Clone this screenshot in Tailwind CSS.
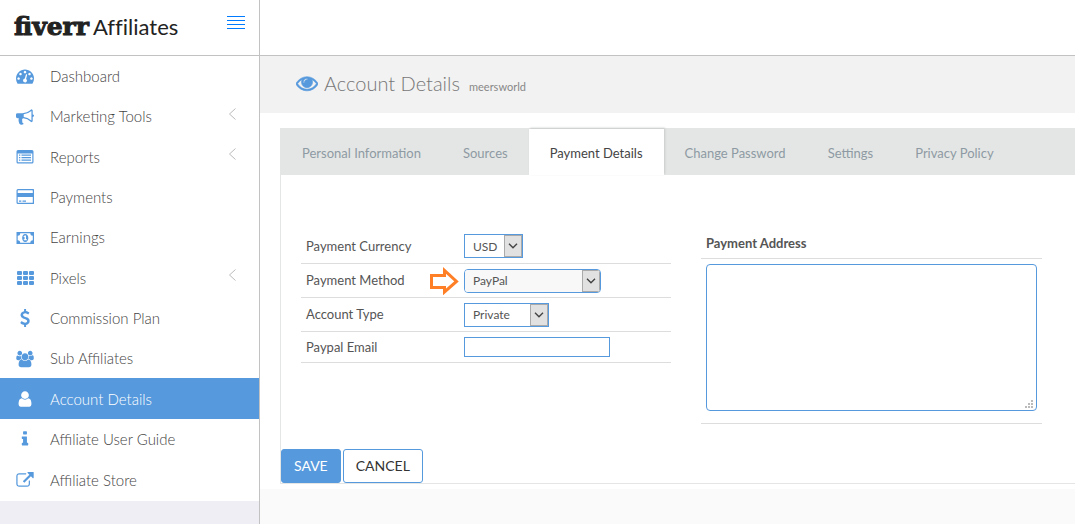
<!DOCTYPE html>
<html lang="en">
<head>
  <meta charset="UTF-8" />
  <meta name="viewport" content="width=device-width, initial-scale=1.0"/>
  <title>Fiverr Affiliates - Account Details</title>
  <script src="https://cdn.jsdelivr.net/npm/@tailwindcss/browser@4"></script>
</head>
<body class="bg-[#fafafa] font-['Lato','Open_Sans',sans-serif] text-[#555]">
  <div class="flex min-h-screen">

    <!-- Sidebar -->
    <aside class="w-[260px] shrink-0 border-r border-[#c2c2c2] bg-[#efeef4]">
      <div class="flex h-14 items-start justify-between border-b border-[#c2c2c2] bg-white pt-3 pr-[14px] pl-[14px]">
        <a href="#" class="flex items-baseline gap-1 pt-px leading-7 text-[#222]">
          <span class="font-['DejaVu_Serif',serif] text-[25px] leading-7 font-bold [-webkit-text-stroke:1px_#222]">fiverr</span>
          <span class="text-[22px] leading-7 [font-variant-ligatures:none]">Affiliates</span>
        </a>
        <button type="button" aria-label="Toggle menu" class="mt-1">
          <svg class="h-[14px] w-[18px]" viewBox="0 0 18 14" fill="#007bff"><path d="M0 0h18v1H0zM0 4h18v1H0zM0 8h18v1H0zM0 12h18v1H0z"/></svg>
        </button>
      </div>

      <nav class="bg-white">
        <ul class="grid min-h-[445px] auto-rows-fr pb-px text-[15px] font-light text-[#444]">
          <li>
            <a href="#" class="flex h-full items-center gap-4 pr-[23px] pl-4">
              <svg class="h-[18px] w-[18px] fill-[#5699dd]" viewBox="0 0 1792 1792"><path d="M384 1152q0-53-37.500-90.500t-90.500-37.500-90.500 37.500-37.500 90.500 37.500 90.500 90.500 37.500 90.500-37.500 37.500-90.500zm192-448q0-53-37.500-90.500t-90.500-37.500-90.500 37.500-37.500 90.500 37.500 90.500 90.500 37.500 90.500-37.500 37.500-90.500zm428 481l101-382q6-26-7.500-48.500t-38.500-29.500-48 6.500-30 39.500l-101 382q-60 5-107 43.500t-63 98.500q-20 77 20 146t117 89 146-20 89-117q16-60-6-117t-72-91zm660-33q0-53-37.500-90.500t-90.500-37.500-90.500 37.500-37.500 90.500 37.500 90.500 90.500 37.500 90.500-37.500 37.500-90.500zm-640-640q0-53-37.500-90.500t-90.500-37.500-90.500 37.500-37.500 90.500 37.500 90.500 90.500 37.500 90.500-37.500 37.500-90.500zm448 192q0-53-37.500-90.500t-90.500-37.500-90.500 37.500-37.500 90.500 37.500 90.500 90.500 37.500 90.500-37.500 37.500-90.500zm320 448q0 261-141 483-19 29-54 29h-1402q-35 0-54-29-141-221-141-483 0-182 71-348t191-286 286-191 348-71 348 71 286 191 191 286 71 348z"/></svg>
              <span>Dashboard</span>
            </a>
          </li>
          <li>
            <a href="#" class="flex h-full items-center gap-4 pr-[23px] pl-4">
              <svg class="h-[18px] w-[18px] fill-[#5699dd]" viewBox="0 0 1792 1792"><path d="M1664 640q53 0 90.500 37.500t37.500 90.500-37.500 90.500-90.500 37.500v384q0 52-38 90t-90 38q-417-347-812-380-58 19-91 66t-31 100.500 40 92.500q-20 33-23 65.500t6 58 33.500 55 48 50 61.500 50.500q-29 58-111.500 83t-168.500 11.500-132-55.500q-7-23-29.500-87.500t-32-94.500-23-89-15-101 3.500-98.500 22-110.500h-122q-66 0-113-47t-47-113v-192q0-66 47-113t113-47h480q435 0 896-384 52 0 90 38t38 90v384zm-128 604v-954q-394 302-768 343v270q377 42 768 341z"/></svg>
              <span>Marketing Tools</span>
              <svg class="mb-[6px] ml-auto h-3 w-2" viewBox="0 0 8 12" fill="none" stroke="#bbb"><path d="M7.500.5L1.500 6l6 5.500"/></svg>
            </a>
          </li>
          <li>
            <a href="#" class="flex h-full items-center gap-4 pr-[23px] pl-4">
              <svg class="h-[18px] w-[18px] fill-[#5699dd]" viewBox="0 0 18 18"><path fill-rule="evenodd" d="M2 2h14a1.500 1.500 0 0 1 1.500 1.500v10.500a1.500 1.500 0 0 1-1.500 1.500H2a1.500 1.500 0 0 1-1.500-1.500V3.500A1.500 1.500 0 0 1 2 2zM1.700 5.500v8.300q0 .5.500.5h13.600q.5 0 .5-.5V5.500z"/><path d="M3 6.500h1.300v1.300H3zM5.500 6.500H15v1.300H5.500zM3 9h1.300v1.300H3zM5.500 9H15v1.300H5.500zM3 11.500h1.300v1.300H3zM5.500 11.500H15v1.300H5.500z"/></svg>
              <span>Reports</span>
              <svg class="mb-[6px] ml-auto h-3 w-2" viewBox="0 0 8 12" fill="none" stroke="#bbb"><path d="M7.500.5L1.500 6l6 5.500"/></svg>
            </a>
          </li>
          <li>
            <a href="#" class="flex h-full items-center gap-4 pr-[23px] pl-4">
              <svg class="h-[18px] w-[18px] fill-[#5699dd]" viewBox="0 0 18 18"><path fill-rule="evenodd" d="M2 1h15a1.500 1.500 0 0 1 1.500 1.500v12a1.500 1.500 0 0 1-1.500 1.500H2a1.500 1.500 0 0 1-1.500-1.500v-12A1.500 1.500 0 0 1 2 1zM1.700 2.700V5h15.100V2.700q0-.5-.5-.5H2.200q-.5 0-.5.5zM1.700 9v5.300q0 .5.500.5h14.100q.5 0 .5-.5V9z"/><path d="M3 12.500h2.300v1.200H3zM6.500 12.500H10v1.200H6.500z"/></svg>
              <span>Payments</span>
            </a>
          </li>
          <li>
            <a href="#" class="flex h-full items-center gap-4 pr-[23px] pl-4">
              <svg class="h-[18px] w-[18px] fill-[#5699dd]" viewBox="0 0 18 18"><path fill-rule="evenodd" d="M.5 3H18v12H.5zM4.200 4.200A2.500 2.500 0 0 1 1.700 6.700v4.600a2.500 2.500 0 0 1 2.500 2.500h10.100a2.500 2.500 0 0 1 2.500-2.500V6.700a2.500 2.500 0 0 1-2.500-2.500z"/><path fill-rule="evenodd" d="M9.250 5c2 0 3.100 1.900 3.100 4s-1.100 4-3.100 4-3.100-1.900-3.100-4 1.100-4 3.100-4zM8.700 6.500l-1.300 1.100.6.700.6-.5v2.500h-.9v1h3.200v-1h-.9V6.500z"/></svg>
              <span>Earnings</span>
            </a>
          </li>
          <li>
            <a href="#" class="flex h-full items-center gap-4 pr-[23px] pl-4">
              <svg class="h-[18px] w-[18px] fill-[#5699dd]" viewBox="0 0 18 18"><g><rect x="1" y="2" width="5" height="4" rx="1"/><rect x="7" y="2" width="5" height="4" rx="1"/><rect x="13" y="2" width="5" height="4" rx="1"/><rect x="1" y="7" width="5" height="4" rx="1"/><rect x="7" y="7" width="5" height="4" rx="1"/><rect x="13" y="7" width="5" height="4" rx="1"/><rect x="1" y="12" width="5" height="4" rx="1"/><rect x="7" y="12" width="5" height="4" rx="1"/><rect x="13" y="12" width="5" height="4" rx="1"/></g></svg>
              <span>Pixels</span>
              <svg class="mb-[6px] ml-auto h-3 w-2" viewBox="0 0 8 12" fill="none" stroke="#bbb"><path d="M7.500.5L1.500 6l6 5.500"/></svg>
            </a>
          </li>
          <li>
            <a href="#" class="flex h-full items-center gap-4 pr-[23px] pl-4">
              <svg class="h-[18px] w-[18px] fill-[#5699dd]" viewBox="0 0 1792 1792"><path d="M1362 1185q0 153-99.500 263.500t-258.500 136.500v175q0 14-9 23t-23 9h-135q-13 0-22.500-9.500t-9.500-22.500v-175q-66-9-127.500-31t-101.500-44.500-74-48-46.500-37.500-17.500-18q-17-21-2-41l103-135q7-10 23-12 15-2 24 9l2 2q113 99 243 125 37 8 74 8 81 0 142.500-43t61.500-122q0-28-15-53t-33.500-42-58.500-37.500-66-32-80-32.500q-39-16-61.500-25t-61.500-26.500-62.500-31-56.500-35.500-53.500-42.500-43.500-49-35.500-58-21-66.500-8.500-78q0-138 98-242t255-134v-180q0-13 9.500-22.500t22.500-9.500h135q14 0 23 9t9 23v176q57 6 110.500 23t87 33.500 63.500 37.500 39 29 15 14q17 18 5 38l-81 146q-8 15-23 16-14 3-27-7-3-3-14.500-12t-39-26.500-58.500-32-74.500-26-85.500-11.500q-95 0-155 43t-60 111q0 26 8.500 48t29.500 41.500 39.500 33 56 31 60.500 27 70 27.500q53 20 81 31.500t76 35 75.500 42.500 62 50 53 63.500 31.500 76.500 13 94z"/></svg>
              <span>Commission Plan</span>
            </a>
          </li>
          <li>
            <a href="#" class="flex h-full items-center gap-4 pr-[23px] pl-4">
              <svg class="h-[18px] w-[18px] fill-[#5699dd]" viewBox="32 0 1984 1792"><path d="M657 896q-162 5-265 128h-134q-82 0-138-40.500t-56-118.500q0-353 124-353 6 0 43.500 21t97.500 42.500 119 21.500q67 0 133-23-5 37-5 66 0 159 90 293zm1071 637q0 120-73 189.500t-194 69.500h-874q-121 0-194-69.500t-73-189.500q0-53 3.500-103.500t14-109 26.500-108.500 43-97.500 62-81 85.500-53.500 111.500-20q10 0 43 21.500t73 48 107 48 135 21.500 135-21.500 107-48 73-48 43-21.500q61 0 111.500 20t85.500 53.500 62 81 43 97.500 26.500 108.500 14 109 3.500 103.500zm-1024-1277q0 106-75 181t-181 75-181-75-75-181 75-181 181-75 181 75 75 181zm704 384q0 159-112.500 271.500t-271.500 112.500-271.500-112.500-112.500-271.500 112.500-271.500 271.500-112.500 271.500 112.500 112.500 271.500zm576 225q0 78-56 118.500t-138 40.500h-134q-103-123-265-128 90-134 90-293 0-29-5-66 66 23 133 23 59 0 119-21.500t97.500-42.500 43.500-21q124 0 124 353zm-128-609q0 106-75 181t-181 75-181-75-75-181 75-181 181-75 181 75 75 181z"/></svg>
              <span>Sub Affiliates</span>
            </a>
          </li>
          <li>
            <a href="#" class="flex h-full items-center gap-4 bg-[#5699dd] pr-[23px] pl-4 text-white shadow-[0_-1px_0_#5699dd]">
              <svg class="h-[18px] w-[18px] fill-white" viewBox="0 0 1792 1792"><path d="M1536 1399q0 109-62.500 187t-150.500 78h-854q-88 0-150.500-78t-62.500-187q0-85 8.500-160.500t31.500-152 58.500-131 94-89 134.500-34.500q131 128 313 128t313-128q76 0 134.500 34.500t94 89 58.500 131 31.500 152 8.500 160.500zm-256-887q0 159-112.500 271.500t-271.500 112.500-271.500-112.500-112.500-271.500 112.500-271.500 271.500-112.500 271.500 112.500 112.500 271.500z"/></svg>
              <span>Account Details</span>
            </a>
          </li>
          <li>
            <a href="#" class="flex h-full items-center gap-4 pr-[23px] pl-4">
              <svg class="h-[18px] w-[18px] fill-[#5699dd]" viewBox="0 0 1792 1792"><path d="M1216 1344v128q0 26-19 45t-45 19h-512q-26 0-45-19t-19-45v-128q0-26 19-45t45-19h64v-384h-64q-26 0-45-19t-19-45v-128q0-26 19-45t45-19h384q26 0 45 19t19 45v576h64q26 0 45 19t19 45zm-128-1152v192q0 26-19 45t-45 19h-256q-26 0-45-19t-19-45v-192q0-26 19-45t45-19h256q26 0 45 19t19 45z"/></svg>
              <span>Affiliate User Guide</span>
            </a>
          </li>
          <li>
            <a href="#" class="flex h-full items-center gap-4 pr-[23px] pl-4">
              <svg class="h-[18px] w-[18px] fill-[#5699dd]" viewBox="32 0 1856 1792"><path d="M1472 992v320q0 119-84.500 203.500t-203.500 84.500h-832q-119 0-203.500-84.500t-84.500-203.500v-832q0-119 84.500-203.500t203.500-84.500h704q14 0 23 9t9 23v64q0 14-9 23t-23 9h-704q-66 0-113 47t-47 113v832q0 66 47 113t113 47h832q66 0 113-47t47-113v-320q0-14 9-23t23-9h64q14 0 23 9t9 23zm384-864v512q0 26-19 45t-45 19-45-19l-176-176-652 652q-10 10-23 10t-23-10l-114-114q-10-10-10-23t10-23l652-652-176-176q-19-19-19-45t19-45 45-19h512q26 0 45 19t19 45z"/></svg>
              <span>Affiliate Store</span>
            </a>
          </li>
        </ul>
      </nav>
    </aside>

    <!-- Main column -->
    <div class="min-w-0 flex-1">
      <div class="h-14 border-b border-[#c2c2c2] bg-white"></div>

      <!-- Page title -->
      <header class="flex h-[57px] items-center bg-[#f2f2f2] pb-1 pl-9">
        <svg class="mr-[6px] h-[22px] w-[22px] fill-[#5699dd] stroke-[#5699dd] stroke-[50]" viewBox="0 0 1792 1792"><path d="M1664 960q-152-236-381-353 61 104 61 225 0 185-131.500 316.500t-316.500 131.500-316.500-131.500-131.500-316.500q0-121 61-225-229 117-381 353 133 205 333.500 326.500t434.500 121.500 434.500-121.500 333.500-326.500zm-720-384q0-20-14-34t-34-14q-125 0-214.500 89.500t-89.500 214.500q0 20 14 34t34 14 34-14 14-34q0-86 61-147t147-61q20 0 34-14t14-34zm848 384q0 34-20 69-140 230-376.500 368.500t-499.500 138.500-499.500-139-376.500-368q-20-35-20-69t20-69q140-229 376.500-368t499.500-139 499.500 139 376.500 368q20 35 20 69z"/></svg>
        <div class="flex items-baseline gap-[9px]">
          <h1 class="text-xl font-light text-[#777]">Account Details</h1>
          <small class="text-[11px] text-[#888]">meersworld</small>
        </div>
      </header>

      <main class="bg-white pt-[15px] pb-[5px] pl-5">
        <div class="border-b border-l border-[#e4e6e5]">

          <!-- Tabs -->
          <nav class="flex h-[47px] border-t border-[#e4e6e5] bg-[#e4e6e5] text-[13px] text-[#8e9aa3]">
            <a href="#" class="flex items-center px-[21px] pt-[3px]">Personal Information</a>
            <a href="#" class="flex items-center px-[21px] pt-[3px]">Sources</a>
            <a href="#" class="flex items-center bg-white px-[21px] pt-[3px] text-[#444] shadow-[1px_-1px_2px_#c8caca]">Payment Details</a>
            <a href="#" class="flex items-center px-[21px] pt-[3px]">Change Password</a>
            <a href="#" class="flex items-center px-[21px] pt-[3px]">Settings</a>
            <a href="#" class="flex items-center px-[21px] pt-[3px]">Privacy Policy</a>
          </nav>

          <form>
            <div class="grid grid-cols-[370px_341px] items-start gap-[30px] px-5 pt-[54px] pb-[25px] text-[13px]">

              <div>
                <div class="flex h-[35px] items-center border-b border-[#ddd] pl-[5px]">
                  <label for="currency" class="w-[158px] pt-px">Payment Currency</label>
                  <div class="grid h-6 w-[59px] grid-cols-[1fr_18px] border border-[#5699dd]">
                    <select id="currency" class="col-span-2 col-start-1 row-start-1 appearance-none bg-white pt-px pl-2 text-xs outline-none">
                      <option>USD</option>
                    </select>
                    <span class="pointer-events-none col-start-2 row-start-1 flex items-center justify-center border border-[#aaa] bg-[#e1e1e1]">
                      <svg class="h-[6px] w-[10px]" viewBox="0 0 10 6" fill="none" stroke="#444" stroke-width="1.400"><path d="M1 .7l4 4 4-4"/></svg>
                    </span>
                  </div>
                </div>
                <div class="flex h-[34px] items-center border-b border-[#ddd] pl-[5px]">
                  <label for="method" class="w-[124px]">Payment Method</label>
                  <svg class="mr-1 h-[28px] w-[30px]" viewBox="0 0 30 28" fill="none" stroke="#ff7f27" stroke-width="3"><path d="M1.500 8.500h13V3.500L26.500 14.500 14.500 25V20.500h-13z"/></svg>
                  <div class="grid h-6 w-[137px] grid-cols-[1fr_18px] overflow-hidden rounded-sm border border-[#5699dd]">
                    <select id="method" class="col-span-2 col-start-1 row-start-1 appearance-none bg-[#f8f8f8] pt-px pl-2 text-xs outline-none">
                      <option>PayPal</option>
                    </select>
                    <span class="pointer-events-none col-start-2 row-start-1 flex items-center justify-center border border-[#aaa] bg-[#e1e1e1]">
                      <svg class="h-[6px] w-[10px]" viewBox="0 0 10 6" fill="none" stroke="#444" stroke-width="1.400"><path d="M1 .7l4 4 4-4"/></svg>
                    </span>
                  </div>
                </div>
                <div class="flex h-[34px] items-center border-b border-[#ddd] pl-[5px]">
                  <label for="type" class="w-[158px]">Account Type</label>
                  <div class="grid h-6 w-[85px] grid-cols-[1fr_18px] border border-[#5699dd]">
                    <select id="type" class="col-span-2 col-start-1 row-start-1 appearance-none bg-white pt-px pl-2 text-xs outline-none">
                      <option>Private</option>
                    </select>
                    <span class="pointer-events-none col-start-2 row-start-1 flex items-center justify-center border border-[#aaa] bg-[#e1e1e1]">
                      <svg class="h-[6px] w-[10px]" viewBox="0 0 10 6" fill="none" stroke="#444" stroke-width="1.400"><path d="M1 .7l4 4 4-4"/></svg>
                    </span>
                  </div>
                </div>
                <div class="flex h-[31px] items-center border-b border-[#ddd] pl-[5px]">
                  <label for="email" class="w-[158px] pt-px">Paypal Email</label>
                  <input id="email" type="text" class="h-5 w-[146px] border border-[#5699dd] bg-white px-1 outline-none" />
                </div>
              </div>

              <div>
                <label for="address" class="flex h-[30px] items-center border-b border-[#ddd] pt-px pl-[5px] font-bold">Payment Address</label>
                <div class="border-b border-[#ddd] px-[5px] pt-[5px] pb-3">
                  <div class="relative">
                    <textarea id="address" class="block h-[147px] w-full resize-none rounded-sm border border-[#5699dd] bg-white p-1 outline-none"></textarea>
                    <svg class="pointer-events-none absolute right-1 bottom-[3px] h-2 w-2" viewBox="0 0 8 8" fill="#bbb"><path d="M6 0h2v2H6zM3 3h2v2H3zM6 3h2v2H6zM0 6h2v2H0zM3 6h2v2H3zM6 6h2v2H6z"/></svg>
                  </div>
                </div>
              </div>
            </div>

            <div class="flex gap-[2px] text-sm">
              <button type="submit" class="h-[34px] rounded-[3px] border border-[#5699dd] bg-[#5699dd] px-3 text-white">SAVE</button>
              <button type="button" class="h-[34px] rounded-[3px] border border-[#5699dd] bg-white px-3 text-[#333]">CANCEL</button>
            </div>
          </form>
        </div>
      </main>
    </div>
  </div>
</body>
</html>
